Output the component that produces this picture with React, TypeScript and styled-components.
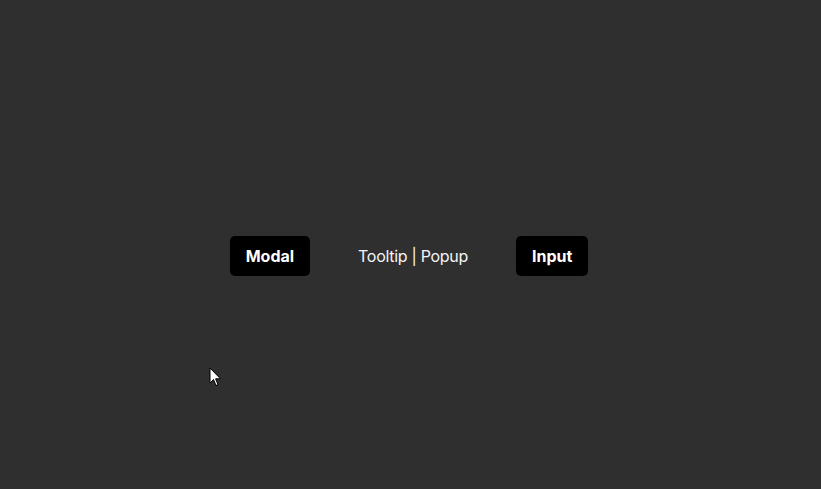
import * as React from 'react';
import styled, { createGlobalStyle } from 'styled-components';

const GlobalStyle = createGlobalStyle`
  html, body {
    margin: 0;
    padding: 0;
    background-color: #2f2f2f;
    font-family: Inter, 'Noto Sans', 'Liberation Sans', sans-serif;
  }
`;

const Page = styled.div`
  position: relative;
  height: 489px;
  box-sizing: border-box;
  padding: 23px 3px 0 0;
  display: flex;
  align-items: center;
  justify-content: center;
`;

const Row = styled.div`
  display: flex;
  align-items: center;
  gap: 32px;
`;

const Button = styled.button<{ $plain?: boolean }>`
  height: 40px;
  padding: 0 16px;
  border: none;
  border-radius: 5px;
  background-color: ${(p) => (p.$plain ? 'transparent' : '#000000')};
  color: ${(p) => (p.$plain ? '#f4f4f4' : '#ffffff')};
  font-family: inherit;
  font-size: 16px;
  font-weight: ${(p) => (p.$plain ? 400 : 700)};
  letter-spacing: ${(p) => (p.$plain ? '-0.3px' : '0')};
  cursor: pointer;
`;

const Cursor = styled.svg`
  position: absolute;
  left: 209px;
  top: 367px;
`;

const App = () => {
  return (
    <>
      <GlobalStyle />
      <Page>
        <Row>
          <Button>Modal</Button>
          <Button $plain>Tooltip | Popup</Button>
          <Button>Input</Button>
        </Row>
        <Cursor width="13" height="20" viewBox="0 0 13 20">
          <path d="M1 1 L1 16 L4.5 12.5 L7 18.5 L9 17.6 L6.6 11.8 L11.5 11.8 Z" fill="#fff" stroke="#000" strokeWidth="1" />
        </Cursor>
      </Page>
    </>
  );
};

export default App;
